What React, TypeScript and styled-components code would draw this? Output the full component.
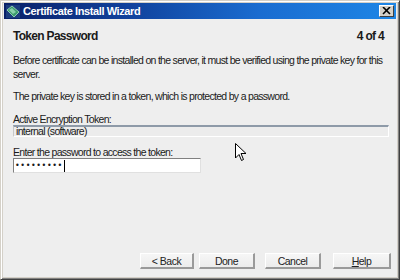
import React from "react";
import styled, { createGlobalStyle } from "styled-components";

const Global = createGlobalStyle`
  html, body { margin: 0; padding: 0; background: #ffffff; }
  * { box-sizing: border-box; }
`;

const FONT = `"Liberation Sans", Arial, sans-serif`;

const Root = styled.div`
  position: relative;
  width: 400px;
  height: 280px;
`;

const Window = styled.div`
  width: 400px;
  height: 280px;
  display: flex;
  flex-direction: column;
  background: #eeeeee;
  border-top: 1px solid #d4d0c8;
  border-left: 1px solid #d4d0c8;
  border-right: 1px solid #404040;
  border-bottom: 1px solid #404040;
  box-shadow: inset 1px 1px 0 #ffffff, inset -1px -1px 0 #808080, inset 2px 2px 0 #d4d0c8, inset -2px -2px 0 #d4d0c8;
  padding: 2px 3px 3px 3px;
  font-family: ${FONT};
  color: #1a1a1a;
`;

const TitleBar = styled.div`
  height: 16px;
  display: flex;
  align-items: center;
  padding: 0 2px;
  gap: 3px;
  background: linear-gradient(to right, #0a2068 0%, #10409a 30%, #1a6cd0 65%, #1e86e6 100%);
  flex: none;
`;

const TitleText = styled.span`
  color: #ffffff;
  font-weight: bold;
  font-size: 11px;
  flex: 1;
  letter-spacing: -0.4px;
`;

const CloseButton = styled.div`
  width: 15px;
  height: 12px;
  background: #d4d0c8;
  border-top: 1px solid #ffffff;
  border-left: 1px solid #ffffff;
  border-right: 1px solid #404040;
  border-bottom: 1px solid #404040;
  display: flex;
  align-items: center;
  justify-content: center;
`;

const Body = styled.div`
  flex: 1;
  display: flex;
  flex-direction: column;
  padding: 10px 5px 7px 9px;
`;

const Header = styled.div`
  display: flex;
  justify-content: space-between;
  align-items: baseline;
  font-weight: bold;
  font-size: 12px;
  letter-spacing: -0.7px;
  padding-right: 7px;
`;

const Para = styled.p<{ $top: number }>`
  margin: ${(p) => p.$top}px 0 0 0;
  font-size: 10.5px;
  letter-spacing: -0.7px;
  line-height: 14px;
  white-space: nowrap;
`;

const Label = styled.div<{ $top: number }>`
  margin-top: ${(p) => p.$top}px;
  font-size: 10.5px;
  letter-spacing: -0.7px;
  line-height: 14px;
`;

const ReadOnlyField = styled.div`
  margin-top: -1px;
  height: 12px;
  width: 376px;
  background: #ececec;
  border-top: 2px solid #8e9aa8;
  border-left: 1px solid #c8c8c8;
  border-right: 1px solid #ffffff;
  border-bottom: 1px solid #ffffff;
  font-size: 10.5px;
  letter-spacing: -0.7px;
  line-height: 9px;
  padding-left: 2px;
`;

const PasswordField = styled.div`
  margin-top: -1px;
  height: 15px;
  width: 188px;
  background: #ffffff;
  border-top: 1px solid #808080;
  border-left: 1px solid #808080;
  border-right: 1px solid #e0e0e0;
  border-bottom: 1px solid #e0e0e0;
  display: flex;
  align-items: center;
  padding-left: 1px;
`;

const Dots = styled.span`
  font-family: "DejaVu Sans", sans-serif;
  font-size: 8px;
  letter-spacing: 0.6px;
`;

const Caret = styled.span`
  width: 1px;
  height: 12px;
  background: #000;
  margin-left: 1px;
`;

const Spacer = styled.div`
  flex: 1;
`;

const ButtonRow = styled.div`
  display: flex;
  justify-content: flex-end;
`;

const Button = styled.div<{ $gap: number; $w: number }>`
  width: ${(p) => p.$w}px;
  height: 16px;
  margin-left: ${(p) => p.$gap}px;
  background: linear-gradient(#f6f6f6, #ececec);
  border-top: 1px solid #ffffff;
  border-left: 1px solid #ffffff;
  border-right: 2px solid #9a9a9a;
  border-bottom: 2px solid #9a9a9a;
  font-size: 10.5px;
  letter-spacing: -0.5px;
  display: flex;
  align-items: center;
  justify-content: center;
  color: #222;
`;

const Cursor = styled.svg`
  position: absolute;
  left: 235px;
  top: 143px;
`;

export default function App() {
  return (
    <Root>
      <Global />
      <Window>
        <TitleBar>
          <svg width="14" height="13" viewBox="0 0 14 13">
            <rect x="0" y="0" width="14" height="13" fill="#1c3c7c" />
            <polygon points="1,5 6,1 13,7 8,12" fill="#3c9c6c" stroke="#a8e0c0" strokeWidth="0.8" />
            <polygon points="3,5 6,3 10,7 7,9" fill="#88d0a8" />
          </svg>
          <TitleText>Certificate Install Wizard</TitleText>
          <CloseButton>
            <svg width="9" height="8" viewBox="0 0 9 8">
              <path d="M1 0 L8 7 M8 0 L1 7" stroke="#000" strokeWidth="1.6" />
            </svg>
          </CloseButton>
        </TitleBar>
        <Body>
          <Header>
            <span>Token Password</span>
            <span>4 of 4</span>
          </Header>
          <Para $top={10}>
            Before certificate can be installed on the server, it must be verified using the private key for this
            <br />
            server.
          </Para>
          <Para $top={8}>The private key is stored in a token, which is protected by a password.</Para>
          <Label $top={9}>Active Encryption Token:</Label>
          <ReadOnlyField>internal (software)</ReadOnlyField>
          <Label $top={8}>Enter the password to access the token:</Label>
          <PasswordField>
            <Dots>•••••••••</Dots>
            <Caret />
          </PasswordField>
          <Spacer />
          <ButtonRow>
            <Button $gap={0} $w={54}>&lt; Back</Button>
            <Button $gap={5} $w={56}>Done</Button>
            <Button $gap={10} $w={56}>Cancel</Button>
            <Button $gap={12} $w={58}>
              <span><u>H</u>elp</span>
            </Button>
          </ButtonRow>
        </Body>
      </Window>
      <Cursor width="12" height="19" viewBox="0 0 12 19">
        <path d="M0.5 0.5 L0.5 15 L4 11.5 L6.5 17.5 L8.5 16.5 L6 10.5 L11 10.5 Z" fill="#fff" stroke="#000" strokeWidth="1" />
      </Cursor>
    </Root>
  );
}
